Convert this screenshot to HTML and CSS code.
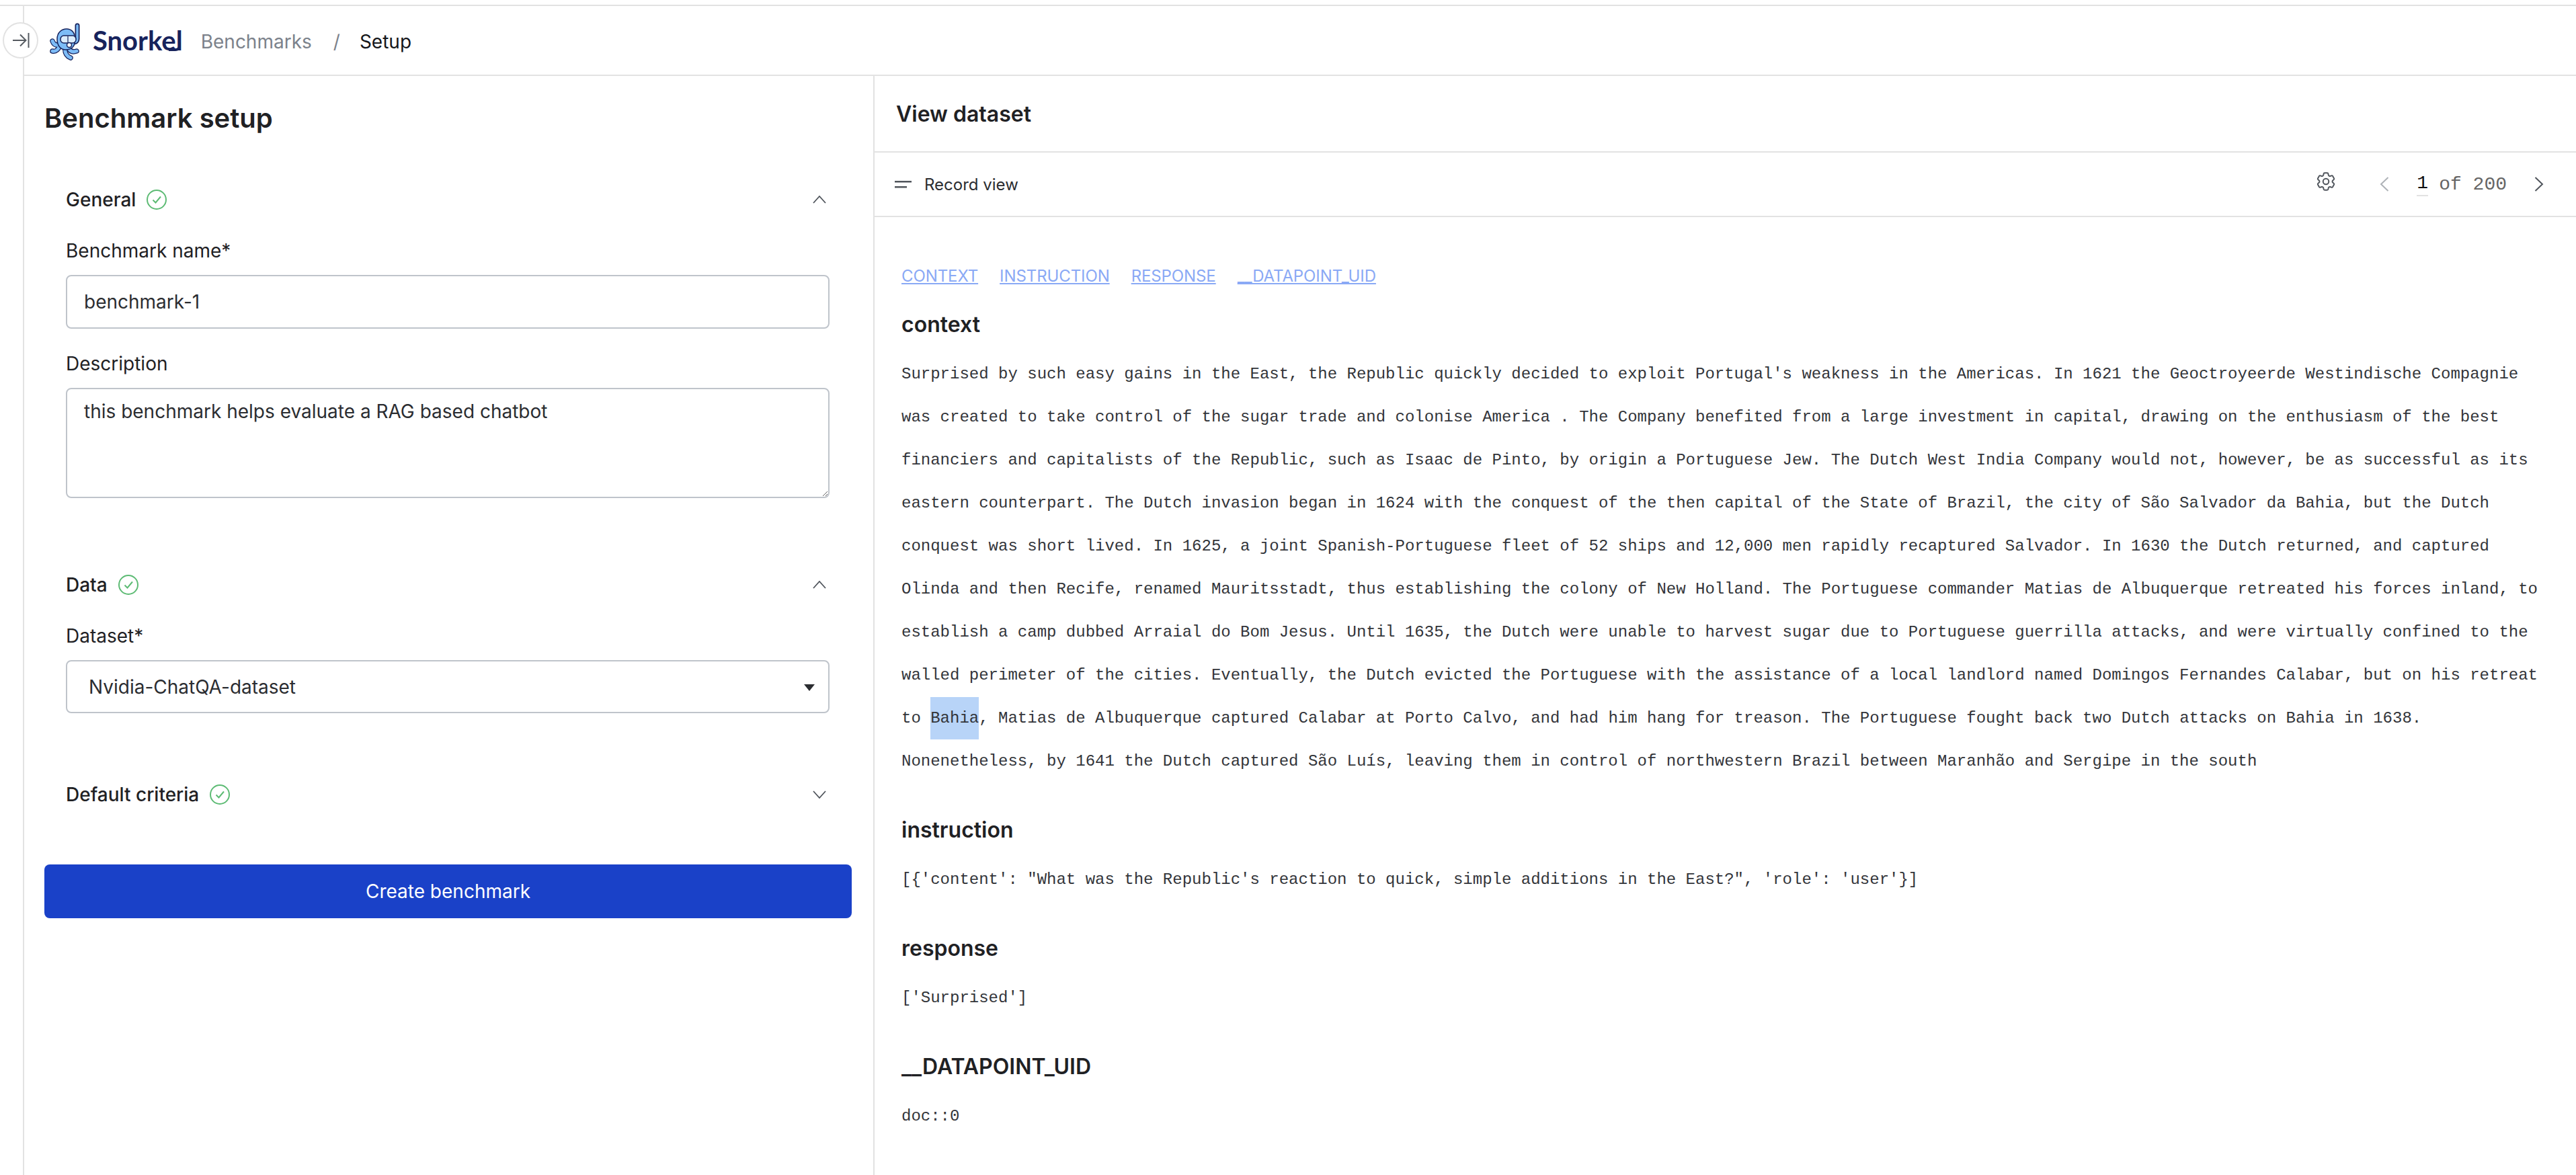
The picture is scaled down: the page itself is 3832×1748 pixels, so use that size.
FILE: index.html
```html
<!DOCTYPE html>
<html>
  <head>
    <meta charset="utf-8">
    <title>Benchmark setup</title>
    <link rel="stylesheet" href="styles.css">
  </head>
  <body>
    <div class="app">
      <div class="rail">
        <button class="rail-toggle" type="button" aria-label="Expand sidebar">
          <svg width="26" height="26" viewBox="0 0 26 26" fill="none" stroke="#555a60" stroke-width="2">
            <path d="M1 13h19M12 4.500l8.500 8.500L12 21.500"/>
            <path d="M24.500 2v22"/>
          </svg>
        </button>
      </div>
      <div class="main">
        <header class="topbar">
          <svg class="logo-mark" width="46" height="56" viewBox="0 0 46 56" fill="none" stroke-linecap="round" stroke-linejoin="round">
            <!-- snorkel tube -->
            <path d="M41 4v20c0 3-2 5-5 5" stroke="#17235c" stroke-width="7"/>
            <path d="M41 4v20c0 3-2 5-5 5" stroke="#7dbcf7" stroke-width="3.500"/>
            <!-- tentacles -->
            <g stroke="#17235c" stroke-width="7.500">
              <path d="M14 30c-1 4-7 5-10-3"/>
              <path d="M15 34c-3 7-6 9-11 8"/>
              <path d="M23 38c-1 7 3 12 8 14"/>
              <path d="M28 38c2 4 6 6 12 4"/>
            </g>
            <g stroke="#7dbcf7" stroke-width="5">
              <path d="M14 30c-1 4-7 5-10-3"/>
              <path d="M15 34c-3 7-6 9-11 8"/>
              <path d="M23 38c-1 7 3 12 8 14"/>
              <path d="M28 38c2 4 6 6 12 4"/>
            </g>
            <path d="M11 24c0-10 7-15 14-15 7 0 12 5 12 12v8c0 6-5 11-13 11-8 0-13-6-13-16z" fill="#7dbcf7" stroke="#17235c" stroke-width="1.500"/>
            <rect x="16" y="19" width="23" height="11" rx="5" fill="#dcedfd" stroke="#17235c" stroke-width="1.500"/>
            <path d="M27 20v9" stroke="#17235c" stroke-width="1.200"/>
            <circle cx="29" cy="33" r="3.500" fill="#fff" stroke="#17235c" stroke-width="1.500"/>
          </svg>
          <span class="logo-text">Snorke<span class="logo-hook">l</span></span>
          <nav class="crumbs">
            <span class="crumb-link">Benchmarks</span>
            <span class="crumb-sep">/</span>
            <span class="crumb-now">Setup</span>
          </nav>
        </header>
        <div class="split">
          <section class="setup">
            <h1 class="setup-title">Benchmark setup</h1>

            <div class="acc acc-general">
              <div class="acc-head">
                <span class="acc-name">General</span>
                <svg class="ok" width="30" height="30" viewBox="0 0 30 30" fill="none" stroke="#5dbb74" stroke-width="2">
                  <circle cx="15" cy="15" r="14"/>
                  <path d="M9.500 15.500l4 4 7.500-9"/>
                </svg>
                <svg class="chev" width="20" height="12" viewBox="0 0 20 12" fill="none" stroke="#50555c" stroke-width="1.800">
                  <path d="M1 11l9-10 9 10"/>
                </svg>
              </div>
              <label class="field-label">Benchmark name*</label>
              <input class="field field-input" type="text" value="benchmark-1">
              <label class="field-label label-desc">Description</label>
              <textarea class="field field-area">this benchmark helps evaluate a RAG based chatbot</textarea>
            </div>

            <div class="acc acc-data">
              <div class="acc-head">
                <span class="acc-name">Data</span>
                <svg class="ok" width="30" height="30" viewBox="0 0 30 30" fill="none" stroke="#5dbb74" stroke-width="2">
                  <circle cx="15" cy="15" r="14"/>
                  <path d="M9.500 15.500l4 4 7.500-9"/>
                </svg>
                <svg class="chev" width="20" height="12" viewBox="0 0 20 12" fill="none" stroke="#50555c" stroke-width="1.800">
                  <path d="M1 11l9-10 9 10"/>
                </svg>
              </div>
              <label class="field-label">Dataset*</label>
              <div class="select-wrap">
                <select class="field field-select">
                  <option>Nvidia-ChatQA-dataset</option>
                </select>
              </div>
            </div>

            <div class="acc acc-criteria">
              <div class="acc-head">
                <span class="acc-name">Default criteria</span>
                <svg class="ok" width="30" height="30" viewBox="0 0 30 30" fill="none" stroke="#5dbb74" stroke-width="2">
                  <circle cx="15" cy="15" r="14"/>
                  <path d="M9.500 15.500l4 4 7.500-9"/>
                </svg>
                <svg class="chev" width="20" height="12" viewBox="0 0 20 12" fill="none" stroke="#50555c" stroke-width="1.800">
                  <path d="M1 1l9 10 9-10"/>
                </svg>
              </div>
            </div>

            <button class="create" type="button">Create benchmark</button>
          </section>

          <section class="viewer">
            <div class="viewer-head">View dataset</div>
            <div class="viewer-bar">
              <svg width="25" height="11" viewBox="0 0 25 11" fill="#50555c">
                <rect width="25" height="2.500"/>
                <rect y="8" width="18" height="2.500"/>
              </svg>
              <span class="viewer-mode">Record view</span>
              <svg class="gear" width="34" height="34" viewBox="0 0 24 24" fill="none" stroke="#50555c" stroke-width="1.400">
                <path d="M9.594 3.940c.09-.542.56-.94 1.110-.94h2.593c.55 0 1.020.398 1.110.94l.213 1.281c.063.374.313.686.645.870.074.040.147.083.22.127.324.196.72.257 1.075.124l1.217-.456a1.125 1.125 0 011.370.49l1.296 2.247a1.125 1.125 0 01-.26 1.431l-1.003.827c-.293.24-.438.613-.431.992a6.759 6.759 0 010 .255c-.007.378.138.75.43.99l1.005.828c.424.35.534.954.26 1.430l-1.298 2.247a1.125 1.125 0 01-1.369.491l-1.217-.456c-.355-.133-.75-.072-1.076.124a6.570 6.570 0 01-.22.128c-.331.183-.581.495-.644.869l-.213 1.280c-.09.543-.56.941-1.110.941h-2.594c-.55 0-1.020-.398-1.110-.94l-.213-1.281c-.062-.374-.312-.686-.644-.87a6.520 6.520 0 01-.22-.127c-.325-.196-.72-.257-1.076-.124l-1.217.456a1.125 1.125 0 01-1.369-.49l-1.297-2.247a1.125 1.125 0 01.26-1.431l1.004-.827c.292-.24.437-.613.43-.992a6.932 6.932 0 010-.255c.007-.378-.138-.75-.43-.99l-1.004-.828a1.125 1.125 0 01-.26-1.430l1.297-2.247a1.125 1.125 0 011.370-.491l1.216.456c.356.133.751.072 1.076-.124.072-.044.146-.087.22-.128.332-.183.582-.495.644-.869l.214-1.281z"/>
                <circle cx="12" cy="12" r="3"/>
              </svg>
              <svg class="page-prev" width="14" height="22" viewBox="0 0 14 22" fill="none" stroke="#aeb2b7" stroke-width="2">
                <path d="M12.500 1L2 11l10.500 10"/>
              </svg>
              <span class="page-now">1</span>
              <span class="page-total">of 200</span>
              <svg class="page-next" width="14" height="22" viewBox="0 0 14 22" fill="none" stroke="#50555c" stroke-width="2">
                <path d="M1.500 1L12 11 1.500 21"/>
              </svg>
            </div>
            <div class="record">
              <div class="record-links">
                <a href="#context">CONTEXT</a>
                <a href="#instruction">INSTRUCTION</a>
                <a href="#response">RESPONSE</a>
                <a href="#uid">__DATAPOINT_UID</a>
              </div>
              <h2 class="col-name col-first" id="context">context</h2>
              <p class="col-value"><span>Surprised by such easy gains in the East, the Republic quickly decided to exploit Portugal's weakness in the Americas. In 1621 the Geoctroyeerde Westindische Compagnie was created to take control of the sugar trade and colonise America . The Company benefited from a large investment in capital, drawing on the enthusiasm of the best financiers and capitalists of the Republic, such as Isaac de Pinto, by origin a Portuguese Jew. The Dutch West India Company would not, however, be as successful as its eastern counterpart. The Dutch invasion began in 1624 with the conquest of the then capital of the State of Brazil, the city of São Salvador da Bahia, but the Dutch conquest was short lived. In 1625, a joint Spanish-Portuguese fleet of 52 ships and 12,000 men rapidly recaptured Salvador. In 1630 the Dutch returned, and captured Olinda and then Recife, renamed Mauritsstadt, thus establishing the colony of New Holland. The Portuguese commander Matias de Albuquerque retreated his forces inland, to establish a camp dubbed Arraial do Bom Jesus. Until 1635, the Dutch were unable to harvest sugar due to Portuguese guerrilla attacks, and were virtually confined to the walled perimeter of the cities. Eventually, the Dutch evicted the Portuguese with the assistance of a local landlord named Domingos Fernandes Calabar, but on his retreat</span> <span>to</span> <span class="picked">Bahia</span><span>, Matias de Albuquerque captured Calabar at Porto Calvo, and had him hang for treason. The Portuguese fought back two Dutch attacks on Bahia in 1638.</span> <span>Nonenetheless, by 1641 the Dutch captured São Luís, leaving them in control of northwestern Brazil between Maranhão and Sergipe in the south</span></p>
              <h2 class="col-name" id="instruction">instruction</h2>
              <p class="col-value">[{'content': "What was the Republic's reaction to quick, simple additions in the East?", 'role': 'user'}]</p>
              <h2 class="col-name" id="response">response</h2>
              <p class="col-value">['Surprised']</p>
              <h2 class="col-name" id="uid">__DATAPOINT_UID</h2>
              <p class="col-value">doc::0</p>
            </div>
          </section>
        </div>
      </div>
    </div>
  </body>
</html>
```

FILE: styles.css
```css
* {
  box-sizing: border-box;
}
body {
  margin: 0;
  height: 100vh;
  padding-top: 7px;
  overflow: hidden;
  background: #fff;
  color: #1f2124;
  font-family: Inter, "Liberation Sans", sans-serif;
  font-size: 28px;
}
.app {
  display: flex;
  height: 100%;
  border-top: 2px solid #e2e2e2;
}
.rail {
  position: relative;
  flex: 0 0 36px;
  border-right: 2px solid #e2e2e2;
}
.rail-toggle {
  position: absolute;
  top: 24px;
  left: 4px;
  display: flex;
  align-items: center;
  justify-content: center;
  width: 53px;
  height: 54px;
  padding: 0;
  border: 2px solid #e2e2e2;
  border-radius: 50%;
  background: #fff;
}
.main {
  flex: 1;
  display: flex;
  flex-direction: column;
  min-width: 0;
}

/* top bar */
.topbar {
  flex: 0 0 104px;
  display: flex;
  align-items: center;
  padding-left: 38px;
  border-bottom: 2px solid #e2e2e2;
}
.logo-mark {
  margin-top: 4px;
}
.logo-text {
  margin-left: 18px;
  color: #17235c;
  font-family: Lato, sans-serif;
  font-size: 40px;
  font-weight: 700;
  line-height: 1;
}
.logo-hook {
  position: relative;
}
.logo-hook::after {
  content: "";
  position: absolute;
  right: 3px;
  bottom: 8px;
  width: 14px;
  height: 9px;
  border-right: 4px solid #17235c;
  border-bottom: 4px solid #17235c;
  border-bottom-right-radius: 8px;
}
.crumbs {
  display: flex;
  align-items: center;
  margin-top: 3px;
  margin-left: 27px;
  font-size: 28px;
}
.crumb-link {
  color: #7c828b;
}
.crumb-sep {
  margin-left: 32px;
  color: #7c828b;
}
.crumb-now {
  margin-left: 29px;
  color: #14161a;
}

/* two panes */
.split {
  flex: 1;
  display: flex;
  min-height: 0;
}
.setup {
  flex: 0 0 1265px;
  padding: 39px 32px 0 30px;
  border-right: 2px solid #e2e2e2;
}
.setup-title {
  margin: 0;
  font-size: 40px;
  font-weight: 600;
  line-height: 48px;
}
.acc {
  padding: 0 33px 0 32px;
}
.acc-general {
  margin-top: 77px;
}
.acc-data {
  margin-top: 109px;
}
.acc-criteria {
  margin-top: 101px;
}
.acc-head {
  display: flex;
  align-items: center;
  height: 40px;
}
.acc-name {
  font-weight: 500;
}
.ok {
  margin-left: 16px;
}
.chev {
  margin-left: auto;
  margin-right: 5px;
}
.field-label {
  display: block;
  margin-top: 36px;
  margin-bottom: 16px;
  font-weight: 400;
  line-height: 40px;
}
.label-desc {
  margin-top: 32px;
}
.field {
  display: block;
  width: 100%;
  border: 2px solid #bfc4cb;
  border-radius: 8px;
  background: #fff;
  color: #2b2d31;
  font-family: Inter, sans-serif;
  font-size: 28px;
}
.field-input {
  height: 80px;
  padding: 0 25px;
}
.field-area {
  height: 164px;
  padding: 13px 25px;
  line-height: 40px;
}
.select-wrap {
  position: relative;
}
.select-wrap::after {
  content: "";
  position: absolute;
  top: 36px;
  right: 22px;
  border-left: 8px solid transparent;
  border-right: 8px solid transparent;
  border-top: 10px solid #2b2d31;
}
.field-select {
  height: 79px;
  padding: 0 32px;
  appearance: none;
}
.create {
  display: block;
  width: 1201px;
  height: 80px;
  margin-top: 84px;
  border: 0;
  border-radius: 8px;
  background: #1a41c8;
  color: #fff;
  font-family: Inter, sans-serif;
  font-size: 28px;
}

/* dataset viewer */
.viewer {
  flex: 1;
  min-width: 0;
}
.viewer-head {
  display: flex;
  align-items: center;
  height: 114px;
  padding-left: 32px;
  border-bottom: 2px solid #e2e2e2;
  font-size: 32px;
  font-weight: 600;
}
.viewer-bar {
  display: flex;
  align-items: center;
  height: 96px;
  padding: 0 48px 0 30px;
  border-bottom: 2px solid #e2e2e2;
  font-size: 24px;
}
.viewer-mode {
  margin-left: 19px;
  color: #2b2d31;
}
.gear {
  margin-left: auto;
  margin-top: -8px;
}
.page-prev {
  margin-left: 63px;
}
.page-now,
.page-total {
  font-family: "Liberation Mono", monospace;
  font-size: 28px;
}
.page-now {
  margin-left: 41px;
  padding-bottom: 2px;
  border-bottom: 2px solid #e2e2e2;
  font-weight: 400;
  color: #111;
}
.page-total {
  margin-left: 16px;
  color: #666;
}
.page-next {
  margin-left: 41px;
}
.record {
  padding: 68px 39px 0 40px;
}
.record-links {
  display: flex;
  gap: 32px;
  font-size: 24px;
  letter-spacing: -0.1px;
  line-height: 40px;
}
.record-links a {
  color: #8aa9f5;
}
.col-name {
  margin: 51px 0 21px;
  font-size: 32px;
  font-weight: 600;
  line-height: 40px;
}
.col-first {
  margin-top: 32px;
}
.col-value {
  margin: 0;
  padding-top: 1px;
  color: #33353a;
  font-family: "Liberation Mono", monospace;
  font-size: 24px;
  line-height: 64px;
}
.col-name + .col-value {
  margin-bottom: -1px;
}
.picked {
  padding: 18.400px 0;
  background: #b8d4f8;
}
```
